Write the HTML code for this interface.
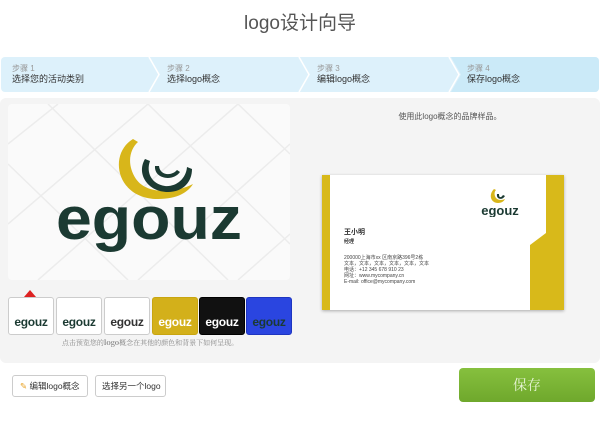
<!DOCTYPE html>
<html><head><meta charset="utf-8"><style>
*{margin:0;padding:0;box-sizing:border-box}
body{width:600px;height:423px;background:#fff;font-family:"Liberation Sans","Noto Sans CJK SC",sans-serif;position:relative;overflow:hidden;color:#333}
.a{position:absolute}
.title{top:8px;left:0;width:600px;text-align:center;font-size:19px;color:#555}
.steps{top:57px;left:1px;width:598px;height:35px;background:#ddf1fb;border-radius:4px;overflow:hidden}
.step{position:absolute;top:0;height:35px;font-size:9px;padding:7px 0 0 11px;line-height:10px}
.step small{color:#999;font-size:8px;display:block}
.panel{top:98px;left:0;width:600px;height:265px;background:#f4f4f4;border-radius:6px}
.prev{top:104px;left:8px;width:282px;height:176px;background:#fafafa;border-radius:4px}
.th{top:297px;width:46px;height:38px;border:1px solid #ccc;border-radius:3px;background:#fff;overflow:hidden}
.th span{position:absolute;left:0;bottom:5px;width:100%;text-align:center;font-weight:bold;font-size:12px;letter-spacing:-0.3px;color:#1b3a32;font-family:"Liberation Sans",sans-serif}
.btn{top:375px;height:22px;border:1px solid #ccc;border-radius:3px;background:#fff;font-size:8.5px;line-height:20px;padding-left:7px;white-space:nowrap}
</style></head><body>
<div class="a title">logo设计向导</div>
<div class="a steps">
<svg class="a" style="left:0;top:0" width="598" height="35"><polygon points="450,0 598,0 598,35 450,35 460,17.5" fill="#cbeaf8"/><polyline points="148,0 158,17.5 148,35" fill="none" stroke="#fff" stroke-width="1.5"/><polyline points="298,0 308,17.5 298,35" fill="none" stroke="#fff" stroke-width="1.5"/><polyline points="448,0 458,17.5 448,35" fill="none" stroke="#fff" stroke-width="1.5"/></svg>
<div class="step" style="left:0"><small>步骤 1</small>选择您的活动类别</div>
<div class="step" style="left:155px"><small>步骤 2</small>选择logo概念</div>
<div class="step" style="left:305px"><small>步骤 3</small>编辑logo概念</div>
<div class="step" style="left:455px"><small>步骤 4</small>保存logo概念</div>
</div>
<div class="a panel"></div>
<div class="a prev">
<svg width="282" height="176"><g stroke="#ececec" stroke-width="1.5" fill="none"><path d="M0,40 L50,0 M0,120 L140,0 M30,176 L230,0 M130,176 L282,40 M230,176 L282,130 M0,60 L120,176 M40,0 L220,176 M140,0 L282,140 M230,0 L282,50"/></g>
<path d="M125,35 C100,50 108,95 150,95 C170,95 180,88 185,80 C170,88 140,92 128,75 C118,60 122,45 130,38 Z" fill="#d8b61a"/>
<path d="M137,55 C128,70 140,88 160,88 C175,88 184,78 184,65 L179,63 C178,75 168,83 157,82 C143,80 138,68 142,57 Z" fill="#1b3a32"/>
<path d="M147,62 C146,75 165,78 172,68 L169,66 C164,72 152,72 151,62 Z" fill="#1b3a32"/>
<text x="141" y="135" text-anchor="middle" font-family="Liberation Sans,sans-serif" font-weight="bold" font-size="60" fill="#1b3a32" textLength="186" lengthAdjust="spacingAndGlyphs">egouz</text></svg>
</div>
<svg class="a" style="left:24px;top:290px" width="12" height="7"><polygon points="0,7 6,0 12,7" fill="#d22"/></svg>
<div class="a th" style="left:8px"><span>egouz</span></div>
<div class="a th" style="left:56px"><span>egouz</span></div>
<div class="a th" style="left:104px"><span style="color:#333">egouz</span></div>
<div class="a th" style="left:152px;background:#d3b01a;border-color:#c8a510"><span style="color:#fff">egouz</span></div>
<div class="a th" style="left:199px;background:#111;border-color:#000"><span style="color:#fff">egouz</span></div>
<div class="a th" style="left:246px;background:#2a45e0;border-color:#1e35c0"><span style="color:#1b3a32">egouz</span></div>
<div class="a" style="top:338px;left:0;width:300px;text-align:center;font-size:7px;color:#888;font-family:'Noto Serif CJK SC',serif">点击预览您的<b>logo</b>概念在其他的颜色和背景下如何呈现。</div>
<div class="a" style="top:111px;left:300px;width:300px;text-align:center;font-size:8px;color:#555">使用此logo概念的品牌样品。</div>
<div class="a" style="top:175px;left:322px;width:242px;height:135px;background:#fff;box-shadow:0 1px 3px rgba(0,0,0,.3)">
<svg class="a" style="left:0;top:0" width="242" height="135"><rect x="0" y="0" width="8" height="135" fill="#d8b91a"/><polygon points="224,0 242,0 242,135 208,135 208,70 224,58" fill="#d8b91a"/></svg>
<svg class="a" style="left:150px;top:12px" width="56" height="30"><path d="M22,2 C16,8 19,16 26,16 C30,16 32,14 33,12 C29,14 24,13 23,9 C22,6 23,4 24,3Z" fill="#d8b61a"/><path d="M25,7 C24,12 30,14 33,9 L31,8 C29,11 27,11 27,7Z" fill="#1b3a32"/><text x="28" y="28" text-anchor="middle" font-weight="bold" font-size="13" fill="#1b3a32" font-family="Liberation Sans,sans-serif">egouz</text></svg>
<div class="a" style="left:22px;top:53px;font-size:7px;font-weight:bold;line-height:9px">王小明<br><span style="font-size:5px">经理</span></div>
<div class="a" style="left:22px;top:80px;font-size:5px;line-height:6px;color:#444">200000上海市xx 区南京路396号2栋<br>文本，文本，文本，文本，文本，文本<br>电话：+12 345 678 910 23<br>网址：www.mycompany.cn<br>E-mail: office@mycompany.com</div>
</div>
<div class="a btn" style="left:12px;width:76px"><span style="color:#e8a020">✎</span> 编辑logo概念</div>
<div class="a btn" style="left:95px;width:71px;padding-left:6px">选择另一个logo</div>
<div class="a" style="top:368px;left:459px;width:136px;height:34px;background:linear-gradient(#86c03e,#6fa82c);border-radius:4px;color:#e8f5d8;text-align:center;line-height:34px;font-size:14px;font-family:'Noto Serif CJK SC',serif">保存</div>
</body></html>
